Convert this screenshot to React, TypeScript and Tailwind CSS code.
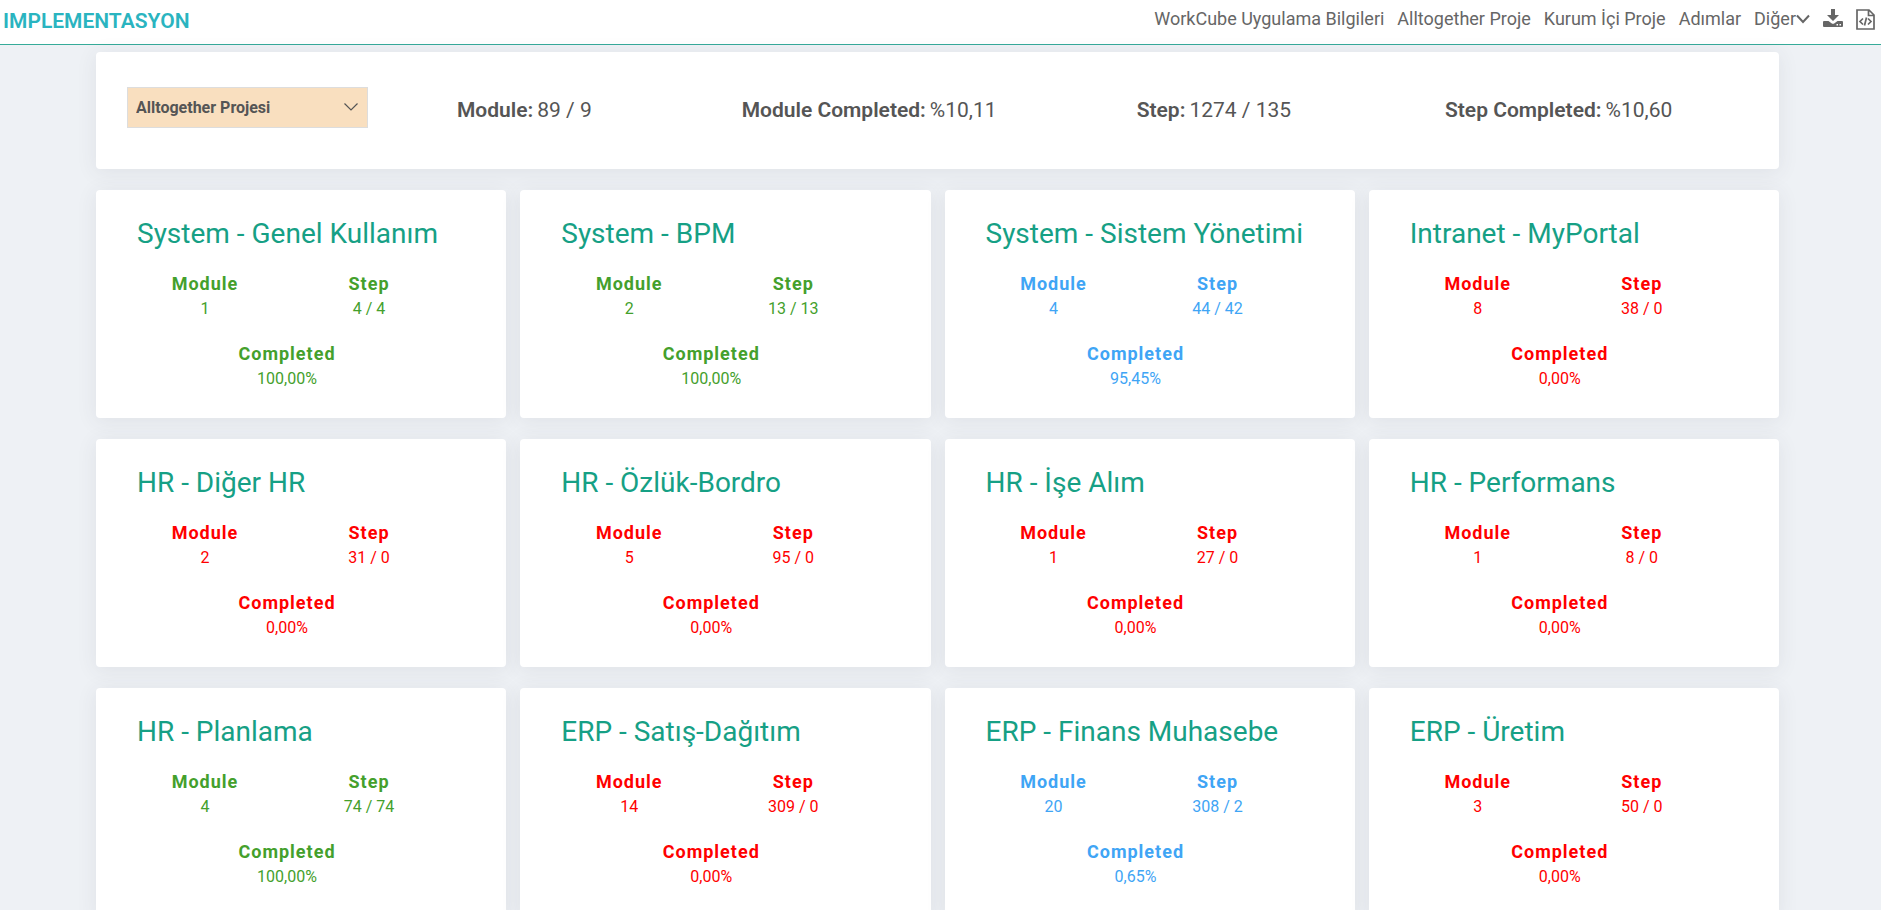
import { clsx } from "clsx";

type Status = "done" | "progress" | "waiting";

interface Family {
  name: string;
  modules: number;
  steps: string;
  completed: string;
  status: Status;
}

const families: Family[] = [
  { name: "System - Genel Kullanım", modules: 1, steps: "4 / 4", completed: "100,00%", status: "done" },
  { name: "System - BPM", modules: 2, steps: "13 / 13", completed: "100,00%", status: "done" },
  { name: "System - Sistem Yönetimi", modules: 4, steps: "44 / 42", completed: "95,45%", status: "progress" },
  { name: "Intranet - MyPortal", modules: 8, steps: "38 / 0", completed: "0,00%", status: "waiting" },
  { name: "HR - Diğer HR", modules: 2, steps: "31 / 0", completed: "0,00%", status: "waiting" },
  { name: "HR - Özlük-Bordro", modules: 5, steps: "95 / 0", completed: "0,00%", status: "waiting" },
  { name: "HR - İşe Alım", modules: 1, steps: "27 / 0", completed: "0,00%", status: "waiting" },
  { name: "HR - Performans", modules: 1, steps: "8 / 0", completed: "0,00%", status: "waiting" },
  { name: "HR - Planlama", modules: 4, steps: "74 / 74", completed: "100,00%", status: "done" },
  { name: "ERP - Satış-Dağıtım", modules: 14, steps: "309 / 0", completed: "0,00%", status: "waiting" },
  { name: "ERP - Finans Muhasebe", modules: 20, steps: "308 / 2", completed: "0,65%", status: "progress" },
  { name: "ERP - Üretim", modules: 3, steps: "50 / 0", completed: "0,00%", status: "waiting" },
];

const summary = [
  { label: "Module:", value: "89 / 9" },
  { label: "Module Completed:", value: "%10,11" },
  { label: "Step:", value: "1274 / 135" },
  { label: "Step Completed:", value: "%10,60" },
];

const links = ["WorkCube Uygulama Bilgileri", "Alltogether Proje", "Kurum İçi Proje", "Adımlar"];

function Header() {
  return (
    <header className="flex h-[45px] items-start justify-between border-b border-[#36ab99] bg-white pl-[3px] pr-[6px]">
      <h1 className="pt-[9px] text-[21px] leading-6 font-semibold text-[#2ab4c0]">IMPLEMENTASYON</h1>
      <nav className="flex items-start gap-[13px] pt-[7px] text-[18px] leading-6 text-[#666666]">
        {links.map((link) => (
          <a key={link} href="#">
            {link}
          </a>
        ))}
        <button type="button" className="flex items-center">
          Diğer
          <svg viewBox="0 0 14 10" className="h-[10px] w-[14px]" fill="none" stroke="currentColor" strokeWidth="2">
            <path d="M1 1.5 7 8l6-6.5" />
          </svg>
        </button>
        <button type="button" aria-label="Download" className="pt-[2px]">
          <svg viewBox="0 0 20 18" className="h-[18px] w-5" fill="currentColor">
            <path d="M8 0h4v6h4l-6 6-6-6h4z" />
            <path
              fillRule="evenodd"
              d="M1 12h4.500l3 2.300q1.500 1 3 0l3-2.300H19a1 1 0 0 1 1 1v4a1 1 0 0 1-1 1H1a1 1 0 0 1-1-1v-4a1 1 0 0 1 1-1zm12.500 3v1.500H15V15zm3 0v1.500H18V15z"
            />
          </svg>
        </button>
        <button type="button" aria-label="Source" className="pt-[2px]">
          <svg viewBox="0 0 19 21" className="h-[21px] w-[19px]" fill="none" stroke="currentColor" strokeWidth="1.700">
            <path d="M1 1h12l5 5v14H1zM12.500 1v5.500H18" />
            <path d="M7 9.500 4 12.500l3 3M12 9.500l3 3-3 3M10.500 8.500l-2 8" />
          </svg>
        </button>
      </nav>
    </header>
  );
}

function SummaryBar() {
  return (
    <section className="flex items-start rounded bg-white pt-[35px] pr-12 pb-[41px] pl-[31px] shadow-[0_3px_20px_1px_rgba(69,65,78,0.080)]">
      <div className="relative shrink-0">
        <select
          aria-label="Project"
          className="h-[41px] w-[241px] appearance-none border border-[#dddddd] bg-[#f9dfbf] px-2 text-[16px] font-bold text-[#555555]"
        >
          <option>Alltogether Projesi</option>
        </select>
        <svg
          viewBox="0 0 14 8"
          className="pointer-events-none absolute top-4 right-[10px] h-2 w-[14px]"
          fill="none"
          stroke="#555555"
          strokeWidth="1.200"
        >
          <path d="M.5.5 7 7 13.500.5" />
        </svg>
      </div>
      <dl className="-ml-4 grid flex-1 grid-cols-4 pt-2 text-[21px] leading-[30px] text-[#555555]">
        {summary.map((item) => (
          <div key={item.label} className="flex justify-center gap-1">
            <dt className="font-semibold">{item.label}</dt>
            <dd>{item.value}</dd>
          </div>
        ))}
      </dl>
    </section>
  );
}

function Stat({ label, value, className }: { label: string; value: string | number; className?: string }) {
  return (
    <div className={className}>
      <dt className="text-[18px] font-bold tracking-[1px]">{label}</dt>
      <dd>{value}</dd>
    </div>
  );
}

function FamilyCard({ family }: { family: Family }) {
  return (
    <article className="rounded bg-white px-[27px] pt-[26px] pb-[27px] shadow-[0_3px_20px_1px_rgba(69,65,78,0.080)]">
      <h2 className="pl-[14px] text-[28px] leading-9 whitespace-nowrap text-[#16a085]">{family.name}</h2>
      <dl
        className={clsx(
          "mt-[19px] grid w-4/5 min-w-[328px] grid-cols-2 gap-y-5 text-center text-[16px] leading-[25px]",
          family.status === "done" && "text-[#44a02c]",
          family.status === "progress" && "text-[#3fa5f5]",
          family.status === "waiting" && "text-[#ff0000]"
        )}
      >
        <Stat label="Module" value={family.modules} />
        <Stat label="Step" value={family.steps} />
        <Stat label="Completed" value={family.completed} className="col-span-2" />
      </dl>
    </article>
  );
}

export default function App() {
  return (
    <div className="h-screen overflow-hidden bg-[#eef1f5] font-[Roboto,sans-serif]">
      <Header />
      <main className="flex flex-col gap-[21px] pt-[7px] pr-[102px] pl-24">
        <SummaryBar />
        <div className="grid grid-cols-4 gap-x-[14px] gap-y-[21px]">
          {families.map((family) => (
            <FamilyCard key={family.name} family={family} />
          ))}
        </div>
      </main>
    </div>
  );
}
